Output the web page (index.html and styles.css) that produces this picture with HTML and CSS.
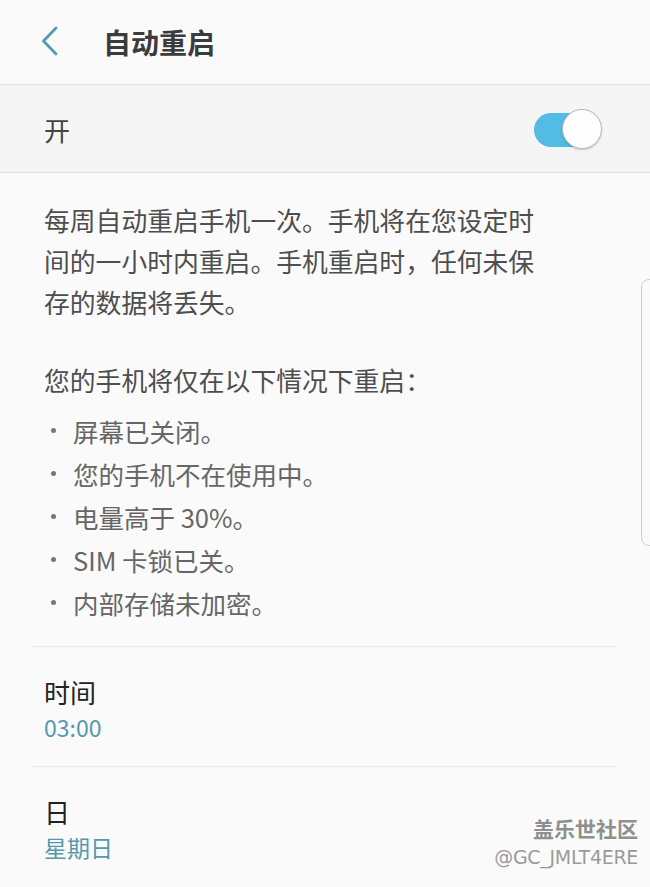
FILE: index.html
```html
<!DOCTYPE html>
<html lang="zh-CN">
<head>
<meta charset="utf-8">
<title>自动重启</title>
<link rel="stylesheet" href="styles.css">
</head>
<body>
<div class="screen">
  <header class="appbar">
    <svg class="back" width="20" height="30" viewBox="0 0 20 30"><polyline points="16,2 3.5,15 16,28" fill="none" stroke="#4f9db1" stroke-width="2.8" stroke-linecap="round" stroke-linejoin="round"/></svg>
    <h1 class="title">自动重启</h1>
  </header>

  <div class="master-row">
    <span class="master-label">开</span>
    <div class="switch"><div class="track"></div><div class="knob"></div></div>
  </div>

  <div class="desc">
    <p class="desc-p">每周自动重启手机一次。手机将在您设定时<br>间的一小时内重启。手机重启时，任何未保<br>存的数据将丢失。</p>
    <p class="desc-p desc-p2">您的手机将仅在以下情况下重启：</p>
    <ul class="conds">
      <li><span class="dot"></span>屏幕已关闭。</li>
      <li><span class="dot"></span>您的手机不在使用中。</li>
      <li><span class="dot"></span>电量高于 30%。</li>
      <li><span class="dot"></span>SIM 卡锁已关。</li>
      <li><span class="dot"></span>内部存储未加密。</li>
    </ul>
  </div>

  <div class="divider"></div>
  <div class="item">
    <div class="item-title">时间</div>
    <div class="item-sub">03:00</div>
  </div>
  <div class="divider"></div>
  <div class="item">
    <div class="item-title">日</div>
    <div class="item-sub">星期日</div>
  </div>

  <div class="scroll-hint"></div>
  <div class="watermark">
    <div class="wm-1">盖乐世社区</div>
    <div class="wm-2">@GC_JMLT4ERE</div>
  </div>
</div>
</body>
</html>
```

FILE: styles.css
```css
html, body {
  margin: 0;
  padding: 0;
  background: #fafafa;
}
body {
  font-family: "Noto Sans CJK SC", "Noto Sans", sans-serif;
  color: #333;
}
.screen {
  position: relative;
  width: 650px;
  height: 887px;
  overflow: hidden;
  background: #fafafa;
}
.appbar {
  height: 84px;
  display: flex;
  align-items: center;
  padding-left: 40px;
  border-bottom: 1px solid #e3e3e3;
  background: #fafafa;
}
.back {
  display: block;
  margin-top: -2px;
}
.title {
  margin: 0 0 0 43px;
  font-size: 28px;
  font-weight: 700;
  color: #3b3b3b;
  line-height: 1;
}
.master-row {
  height: 87px;
  display: flex;
  align-items: center;
  justify-content: space-between;
  padding: 0 48px 0 44px;
  background: #f5f5f5;
  border-bottom: 1px solid #dedede;
}
.master-label {
  font-size: 26px;
  color: #444;
  margin-top: 2px;
}
.switch {
  position: relative;
  width: 68px;
  height: 41px;
  margin-top: 1px;
}
.track {
  position: absolute;
  left: 0;
  top: 4px;
  width: 58px;
  height: 34px;
  border-radius: 17px;
  background: #53bce4;
}
.knob {
  position: absolute;
  right: 0;
  top: 0;
  width: 38px;
  height: 38px;
  border-radius: 50%;
  background: #fdfdfd;
  border: 1px solid #b9b9b9;
  box-shadow: 0 1px 2px rgba(0,0,0,0.18);
}
.desc {
  padding: 26px 0 0 44px;
}
.desc-p {
  margin: 0;
  font-size: 25.8px;
  line-height: 41px;
  color: #4e4e4e;
}
.desc-p2 {
  margin-top: 37px;
}
.conds {
  list-style: none;
  margin: 9px 0 0 0;
  padding: 0;
}
.conds li {
  display: flex;
  align-items: center;
  height: 43px;
  font-size: 25.5px;
  color: #666;
}
.dot {
  width: 5px;
  height: 5px;
  border-radius: 50%;
  background: #777;
  margin: 0 17px 0 7px;
}
.divider {
  margin: 22px 33px 0 32px;
  border-top: 1px solid #ebebeb;
}
.item {
  padding: 27px 0 22px 44px;
}
.item + .divider {
  margin-top: 0;
}
.item-title {
  font-size: 26px;
  line-height: 36px;
  color: #222;
}
.item-sub {
  font-size: 23px;
  line-height: 34px;
  color: #5499ad;
}
.scroll-hint {
  position: absolute;
  left: 641px;
  top: 279px;
  width: 20px;
  height: 267px;
  border: 1px solid #cfcfcf;
  border-radius: 8px;
  box-sizing: border-box;
}
.watermark {
  position: absolute;
  right: 12px;
  top: 814px;
  text-align: right;
}
.wm-1 {
  font-size: 21px;
  line-height: 28px;
  font-weight: 700;
  color: #8f8f8f;
}
.wm-2 {
  font-family: "DejaVu Sans", sans-serif;
  font-size: 19px;
  line-height: 30px;
  color: #9a9a9a;
  letter-spacing: -0.3px;
}
```
